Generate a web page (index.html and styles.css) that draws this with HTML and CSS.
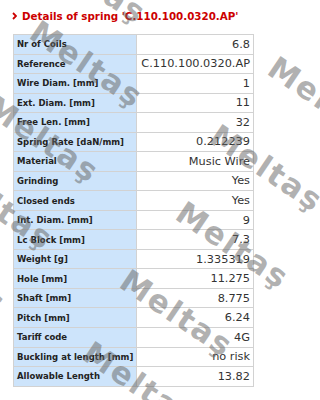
FILE: index.html
```html
<!DOCTYPE html>
<html lang="en">
<head>
    <meta charset="UTF-8">
    <title>Details of spring</title>
    <link rel="stylesheet" href="styles.css">
</head>
<body>
    <div class="page">
        <h2 class="title">
            <svg class="chevron" width="5" height="8" viewBox="0 0 5 8"><polyline points="1,1 4,4 1,7" fill="none" stroke="#cc0000" stroke-width="1.8"/></svg>
            Details of spring 'C.110.100.0320.AP'
        </h2>

        <table class="details">
            <tr><td class="label">Nr of Coils</td><td class="value">6.8</td></tr>
            <tr><td class="label">Reference</td><td class="value">C.110.100.0320.AP</td></tr>
            <tr><td class="label">Wire Diam. [mm]</td><td class="value">1</td></tr>
            <tr><td class="label">Ext. Diam. [mm]</td><td class="value">11</td></tr>
            <tr><td class="label">Free Len. [mm]</td><td class="value">32</td></tr>
            <tr><td class="label">Spring Rate [daN/mm]</td><td class="value">0.212239</td></tr>
            <tr><td class="label">Material</td><td class="value">Music Wire</td></tr>
            <tr><td class="label">Grinding</td><td class="value">Yes</td></tr>
            <tr><td class="label">Closed ends</td><td class="value">Yes</td></tr>
            <tr><td class="label">Int. Diam. [mm]</td><td class="value">9</td></tr>
            <tr><td class="label">Lc Block [mm]</td><td class="value">7.3</td></tr>
            <tr><td class="label">Weight [g]</td><td class="value">1.335319</td></tr>
            <tr><td class="label">Hole [mm]</td><td class="value">11.275</td></tr>
            <tr><td class="label">Shaft [mm]</td><td class="value">8.775</td></tr>
            <tr><td class="label">Pitch [mm]</td><td class="value">6.24</td></tr>
            <tr><td class="label">Tariff code</td><td class="value">4G</td></tr>
            <tr><td class="label">Buckling at length [mm]</td><td class="value">no risk</td></tr>
            <tr><td class="label">Allowable Length</td><td class="value">13.82</td></tr>
        </table>

        <!-- watermark -->
        <div class="watermark">
            <span style="left:90px;top:-20px">Meltaş</span>
            <span style="left:87px;top:64px">Meltaş</span>
            <span style="left:43px;top:139px">Meltaş</span>
            <span style="left:-3px;top:206px">Meltaş</span>
            <span style="left:-50px;top:270px">Meltaş</span>
            <span style="left:357px;top:5px">Meltaş</span>
            <span style="left:325px;top:100px">Meltaş</span>
            <span style="left:267px;top:168px">Meltaş</span>
            <span style="left:233px;top:245px">Meltaş</span>
            <span style="left:177px;top:313px">Meltaş</span>
            <span style="left:140px;top:385px">Meltaş</span>
        </div>
    </div>
</body>
</html>
```

FILE: styles.css
```css
body {
    margin: 0;
    background-color: white;
    font-family: "DejaVu Sans", Verdana, sans-serif;
}

.page {
    position: relative;
    width: 320px;
    height: 400px;
    overflow: hidden;
    padding: 8px 0 0 12px;
    box-sizing: border-box;
}

.title {
    display: flex;
    align-items: center;
    gap: 5px;
    margin: 0 0 10px 0;
    height: 16px;
    font-size: 10.3px;
    font-weight: bold;
    color: #cc0000;
}

.chevron {
    flex: none;
}

.details {
    margin-left: 1px;
    border-collapse: separate;
    border-spacing: 0;
    border-top: 1px solid #d2d2d2;
    border-left: 1px solid #d2d2d2;
    width: 241px;
}

.details td {
    height: 18.54px;
    padding: 0 3px;
    border-right: 1px solid #d2d2d2;
    border-bottom: 1px solid #d2d2d2;
    white-space: nowrap;
}

.label {
    width: 116px;
    background-color: #cde4fb;
    font-size: 8.5px;
    font-weight: bold;
    color: #222;
}

.value {
    text-align: right;
    font-size: 11.3px;
    color: #333;
}

.watermark {
    position: absolute;
    inset: 0;
    pointer-events: none;
}

.watermark span {
    position: absolute;
    transform: translate(-50%, -50%) rotate(34deg);
    font-size: 31px;
    font-weight: bold;
    letter-spacing: 2px;
    color: rgba(100, 100, 100, 0.5);
    white-space: nowrap;
}
```
